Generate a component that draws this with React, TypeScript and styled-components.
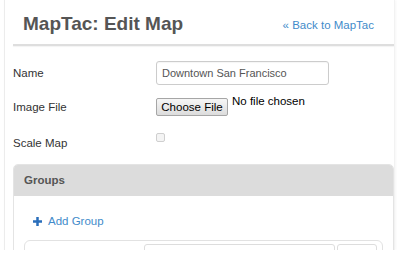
import React from 'react';
import styled, { createGlobalStyle } from 'styled-components';

const GlobalStyle = createGlobalStyle`
  html, body {
    margin: 0;
    padding: 0;
    background: #fff;
  }
  body {
    font-family: "Liberation Sans", Arial, Helvetica, sans-serif;
    font-size: 11.5px;
    color: #333;
  }
`;

const App = () => {
  return (
    <>
      <GlobalStyle />
      <Page>
        <Header>
          <Title>MapTac: Edit Map</Title>
          <BackLink href="#">« Back to MapTac</BackLink>
        </Header>
        <Rule />

        <Form>
          <Row>
            <Label>Name</Label>
            <TextInput defaultValue="Downtown San Francisco" />
          </Row>
          <FileRow>
            <Label>Image File</Label>
            <FileButton type="button">Choose File</FileButton>
            <FileNote>No file chosen</FileNote>
          </FileRow>
          <CheckRow>
            <Label>Scale Map</Label>
            <Checkbox />
          </CheckRow>
        </Form>

        <Panel>
          <PanelHeading>Groups</PanelHeading>
          <PanelBody>
            <AddLink href="#">
              <svg width="9" height="9" viewBox="0 0 9 9">
                <rect x="3.25" y="0" width="2.5" height="9" fill="currentColor" />
                <rect x="0" y="3.25" width="9" height="2.5" fill="currentColor" />
              </svg>
              Add Group
            </AddLink>
            <GroupBox>
              <GroupInput />
              <GroupButton />
            </GroupBox>
          </PanelBody>
        </Panel>
      </Page>
    </>
  );
};

const Page = styled.div`
  margin-left: 4px;
  width: 381px;
  height: 250px;
  overflow: hidden;
  padding-left: 8px;
  border-left: 1px solid #ececec;
  border-right: 1px solid #f2f2f2;
  box-shadow: 1px 0 3px rgba(0, 0, 0, 0.04);
`;

const Header = styled.div`
  height: 44px;
  display: flex;
  align-items: center;
  justify-content: space-between;
  padding: 4px 20px 0 10px;
  box-sizing: border-box;
`;

const Title = styled.h1`
  margin: 0;
  font-size: 19px;
  font-weight: bold;
  color: #555;
`;

const BackLink = styled.a`
  color: #428bca;
  text-decoration: none;
  font-size: 11.5px;
  margin-top: 2px;
`;

const Rule = styled.div`
  height: 2px;
  background: #dedede;
  box-shadow: 0 1px 1px rgba(0, 0, 0, 0.05);
`;

const Form = styled.div`
  display: flex;
  flex-direction: column;
  padding-top: 15px;
`;

const Row = styled.div`
  display: flex;
  align-items: center;
  height: 24px;
`;

const Label = styled.div`
  width: 143px;
  flex-shrink: 0;
  color: #333;
`;

const TextInput = styled.input`
  box-sizing: border-box;
  width: 173px;
  height: 24px;
  border: 1px solid #ccc;
  border-radius: 3px;
  padding: 0 5px;
  font-family: inherit;
  font-size: 11px;
  color: #555;
  outline: none;
  box-shadow: inset 0 1px 1px rgba(0, 0, 0, 0.04);
`;

const FileRow = styled.div`
  display: flex;
  align-items: center;
  height: 20px;
  margin-top: 12px;
`;

const FileButton = styled.button`
  box-sizing: border-box;
  height: 18px;
  width: 72px;
  padding: 0;
  border: 1px solid #a6a6a6;
  border-radius: 2px;
  background: linear-gradient(#f6f6f6, #dcdcdc);
  font-family: inherit;
  font-size: 11.5px;
  color: #000;
`;

const FileNote = styled.span`
  align-self: flex-start;
  margin: -2px 0 0 4px;
  color: #000;
`;

const CheckRow = styled.div`
  display: flex;
  align-items: flex-start;
  line-height: 22px;
  margin-top: 15px;
`;

const Checkbox = styled.span`
  box-sizing: border-box;
  width: 9px;
  height: 9px;
  margin-top: 1px;
  border: 1px solid #cfcfcf;
  border-radius: 2px;
  background: #f4f4f4;
`;

const Panel = styled.div`
  margin-top: 10px;
  border: 1px solid #e4e4e4;
  border-radius: 5px 5px 0 0;
`;

const PanelHeading = styled.div`
  height: 31px;
  line-height: 31px;
  padding-left: 10px;
  background: #dcdcdc;
  border-radius: 4px 4px 0 0;
  font-weight: bold;
  color: #555;
`;

const PanelBody = styled.div`
  padding: 17px 10px 20px;
`;

const AddLink = styled.a`
  display: flex;
  align-items: center;
  gap: 6px;
  height: 16px;
  padding-left: 9px;
  color: #428bca;
  text-decoration: none;

  svg {
    color: #2a6ebb;
  }
`;

const GroupBox = styled.div`
  margin-top: 11px;
  height: 40px;
  border: 1px solid #e2e2e2;
  border-radius: 6px;
  display: flex;
  justify-content: flex-end;
  gap: 2px;
  padding: 3px 5px 0 0;
`;

const GroupInput = styled.div`
  width: 189px;
  height: 24px;
  border: 1px solid #ddd;
  border-radius: 3px;
`;

const GroupButton = styled.div`
  width: 38px;
  height: 24px;
  border: 1px solid #ddd;
  border-radius: 3px;
`;

export default App;
